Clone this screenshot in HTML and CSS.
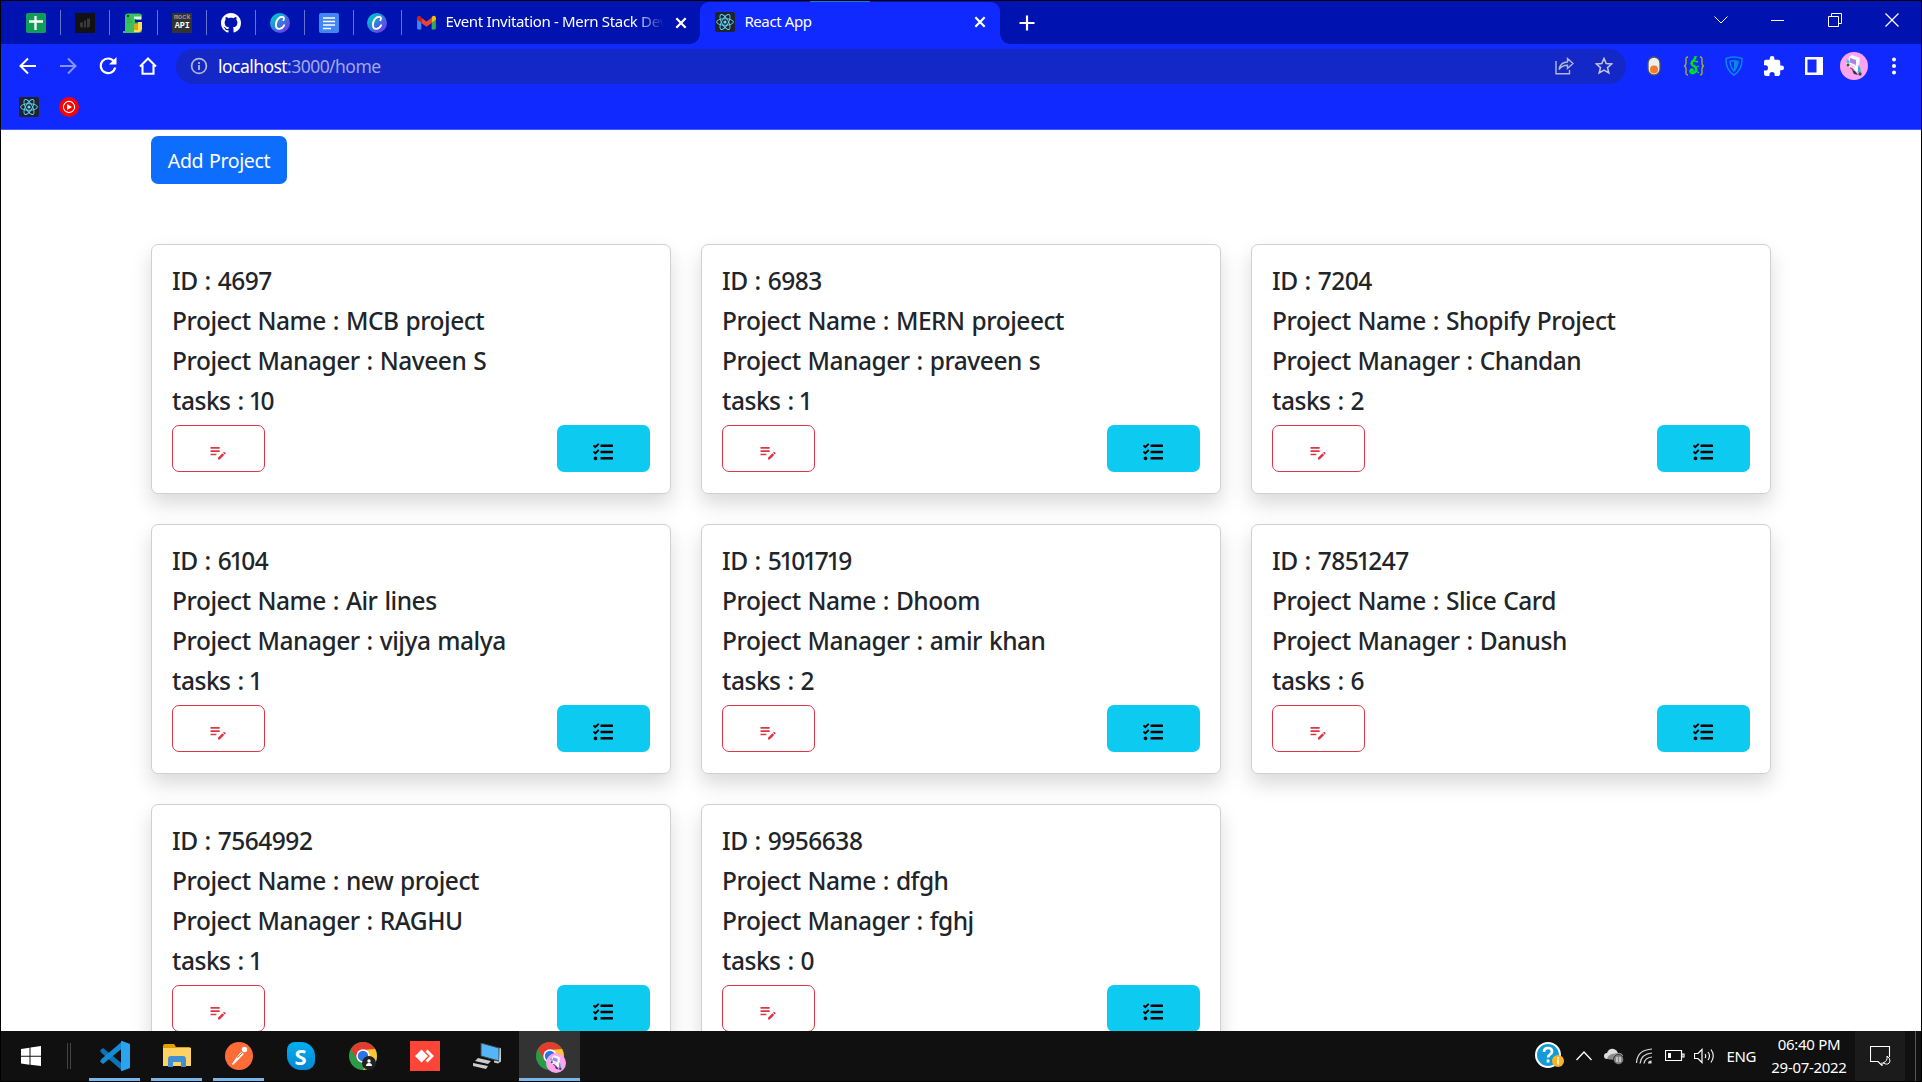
FILE: index.html
```html
<!DOCTYPE html>
<html lang="en">
<head>
<meta charset="utf-8">
<title>React App</title>
<link rel="stylesheet" href="styles.css">
</head>
<body>
<svg class="defs" width="0" height="0">
  <defs>
    <linearGradient id="canva" x1="0" y1="0" x2="1" y2="1"><stop offset=".15" stop-color="#00c4cc"/><stop offset=".55" stop-color="#3f6fe0"/><stop offset="1" stop-color="#7d2ae8"/></linearGradient>
    <symbol id="react" viewBox="0 0 20 20"><rect width="20" height="20" rx="2" fill="#20232a"/><g fill="none" stroke="#61dafb" stroke-width=".9"><ellipse cx="10" cy="10" rx="8.4" ry="3.3"/><ellipse cx="10" cy="10" rx="8.4" ry="3.3" transform="rotate(60 10 10)"/><ellipse cx="10" cy="10" rx="8.4" ry="3.3" transform="rotate(120 10 10)"/></g><circle cx="10" cy="10" r="1.6" fill="#61dafb"/></symbol>
    <symbol id="x" viewBox="0 0 12 12"><path d="M2 2l8 8M10 2l-8 8" stroke="#fff" stroke-width="1.9"/></symbol>
    <symbol id="canva-icon" viewBox="0 0 20 20"><circle cx="10" cy="10" r="10" fill="url(#canva)"/><path d="M13.400 7.300c1.100-1.700.6-3.600-1.400-3.600-3.400 0-6.100 4.400-6.100 8 0 2.700 1.300 4.200 3.300 4.200 2.200 0 3.900-1.600 4.900-3.600" fill="none" stroke="#fff" stroke-width="1.900" stroke-linecap="round"/></symbol>
    <symbol id="edit" viewBox="0 0 24 24"><path fill="currentColor" d="M3 10h11v2H3v-2zm0-2h11V6H3v2zm0 8h7v-2H3v2zm15.010-3.130.71-.71c.39-.39 1.020-.39 1.410 0l.71.71c.39.39.39 1.020 0 1.410l-.71.71-2.120-2.120zm-.71.71-5.300 5.300V21h2.120l5.300-5.300-2.120-2.120z"/></symbol>
    <symbol id="tasks" viewBox="0 0 512 512"><path d="M139.610 35.500a12 12 0 0 0-17 0L58.930 98.810l-22.700-22.120a12 12 0 0 0-17 0L3.530 92.410a12 12 0 0 0 0 17l47.590 47.400a12.780 12.780 0 0 0 17.610 0l15.590-15.620L156.520 69a12.090 12.090 0 0 0 .09-17zm0 159.190a12 12 0 0 0-17 0l-63.680 63.720-22.700-22.100a12 12 0 0 0-17 0L3.530 252a12 12 0 0 0 0 17L51 316.500a12.770 12.770 0 0 0 17.600 0l15.700-15.690 72.200-72.220a12 12 0 0 0 .09-16.900zM64 368c-26.490 0-48.590 21.500-48.590 48S37.530 464 64 464a48 48 0 0 0 0-96zm432 16H208a16 16 0 0 0-16 16v32a16 16 0 0 0 16 16h288a16 16 0 0 0 16-16v-32a16 16 0 0 0-16-16zm0-320H208a16 16 0 0 0-16 16v32a16 16 0 0 0 16 16h288a16 16 0 0 0 16-16V80a16 16 0 0 0-16-16zm0 160H208a16 16 0 0 0-16 16v32a16 16 0 0 0 16 16h288a16 16 0 0 0 16-16v-32a16 16 0 0 0-16-16z"/></symbol>
    <symbol id="scooter" viewBox="0 0 28 28"><circle cx="14" cy="14" r="14" fill="#ffa3ee"/><path d="M9 5l3-2 8 3-1 7-4 2-7-4z" fill="#f4f8ff"/><path d="M10 6l6 2v5l-6-2.500z" fill="#a984d8"/><path d="M6 11l5 2 2 3-2 .5-5-3z" fill="#eef"/><path d="M6.500 7.500l3 1v3l-3-1z" fill="#4fbde8"/><path d="M12 15l6-1 2 4-4 2z" fill="#fff"/><path d="M18 14l2 1 1 6-3-1z" fill="#37b5cf"/><path d="M12 18l3 1 3 4-4-1z" fill="#23364a"/><circle cx="20" cy="22" r="1.700" fill="#31524a"/><circle cx="8" cy="13" r="1.500" fill="#4b4a36"/><path d="M10 15.500l4 3" stroke="#c33d68" stroke-width="1.500"/></symbol>
    <symbol id="chrome" viewBox="0 0 28 28"><circle cx="14" cy="14" r="14" fill="#2c9b47"/><path d="M26.100 7A14 14 0 0 1 14 28l6-10.500L14 7z" fill="#fdc82f"/><path d="M1.900 7A14 14 0 0 1 26.100 7L14 8 8 17.500z" fill="#e33b2e"/><circle cx="14" cy="14" r="6.700" fill="#fff"/><circle cx="14" cy="14" r="5.200" fill="#2c73e8"/></symbol>
  </defs>
</svg>
<div class="screen">
  <header class="browser">
    <div class="tabs">
      <div class="pinned">
        <span class="pin"><svg width="20" height="20"><rect width="20" height="20" rx="2" fill="#0f9d58"/><path d="M9.500 3v14M3 8.500h14" stroke="#fff" stroke-width="2.300"/></svg></span>
        <span class="pin"><svg width="20" height="20"><rect width="20" height="20" fill="#121212"/><path d="M5 9.500h3v5q-3 0-3-2zM9 7.500h2v7H9zM12 5.500h3v7q0 2-3 2z" fill="#3a3a3a"/></svg></span>
        <span class="pin"><svg width="20" height="20"><path d="M2 3q0-2.500 3-2.500h11q3 0 3 3v3h-7v3h7v7.500q0 3-4 3H0v-2h2z" fill="#3bc15c"/><path d="M11 3.500h7v3h-4l-3-1z" fill="#dff5dd"/><path d="M15 9h4v7l-2 3h-6v-4l4-1z" fill="#ffe14a"/><path d="M11 11h4v6h-4z" fill="#d8a52c"/><path d="M4 6h4M4 9h5" stroke="#2da84d"/><circle cx="5" cy="3" r="1.200" fill="#174c25"/></svg></span>
        <span class="pin"><span class="mock"><span>mock</span><b>API</b></span></span>
        <span class="pin"><svg width="20" height="20" viewBox="0 0 16 16"><path fill="#fff" d="M8 0C3.580 0 0 3.580 0 8c0 3.540 2.290 6.530 5.470 7.590.4.070.55-.17.55-.38 0-.19-.01-.82-.01-1.490-2.010.37-2.530-.49-2.690-.94-.09-.23-.48-.94-.82-1.130-.28-.15-.68-.52-.01-.53.63-.01 1.080.58 1.230.82.72 1.210 1.870.87 2.330.66.070-.52.28-.87.51-1.070-1.780-.2-3.640-.89-3.640-3.950 0-.87.31-1.590.82-2.150-.08-.2-.36-1.020.08-2.120 0 0 .67-.21 2.200.82.64-.18 1.320-.27 2-.27s1.360.09 2 .27c1.530-1.040 2.200-.82 2.200-.82.44 1.100.16 1.920.08 2.120.51.56.82 1.270.82 2.150 0 3.070-1.870 3.750-3.650 3.950.29.25.54.73.54 1.480 0 1.070-.01 1.930-.01 2.200 0 .21.15.46.55.38A8.010 8.010 0 0 0 16 8c0-4.420-3.580-8-8-8z"/></svg></span>
        <span class="pin"><svg width="20" height="20"><use href="#canva-icon"/></svg></span>
        <span class="pin"><svg width="20" height="20"><rect width="20" height="20" rx="2" fill="#4285f4"/><path d="M4 5h12M4 8.500h12M4 12h12M4 15.500h8" stroke="#fff" stroke-width="1.700"/></svg></span>
        <span class="pin"><svg width="20" height="20"><use href="#canva-icon"/></svg></span>
      </div>
      <div class="tab mail">
        <svg width="19" height="15" viewBox="0 0 20 16"><path d="M0 2v12q0 1.500 1.500 1.500H4.500V6z" fill="#4285f4"/><path d="M20 2v12q0 1.500-1.500 1.500H15.500V6z" fill="#34a853"/><path d="M4.500 3l5.500 4 5.500-4v5.500L10 12.500 4.500 8.500z" fill="#ea4335"/><path d="M0 2.500Q1-.5 4.500 2v6L0 5z" fill="#c5221f"/><path d="M20 2.500Q19-.5 15.500 2v6L20 5z" fill="#fbbc04"/></svg>
        <span class="tab-title fade">Event Invitation - Mern Stack Dev</span>
        <svg class="close" width="14" height="14"><use href="#x"/></svg>
      </div>
      <div class="tab active">
        <svg width="20" height="20"><use href="#react"/></svg>
        <span class="tab-title">React App</span>
        <svg class="close" width="14" height="14"><use href="#x"/></svg>
      </div>
      <svg class="plus" width="16" height="16"><path d="M8 .5v15M.5 8h15" stroke="#fff" stroke-width="2.200"/></svg>
      <div class="window-buttons">
        <svg width="14" height="14"><path d="M.5 3.500l6.500 6.500 6.500-6.500" fill="none" stroke="#fff"/></svg>
        <svg width="14" height="14"><path d="M0 7.500h13" stroke="#fff"/></svg>
        <svg width="14" height="14"><path d="M.5 3.500h10v10H.5zM3.500 3V.5h10v10H11" fill="none" stroke="#fff"/></svg>
        <svg width="14" height="14"><path d="M.5.5l13 13M13.500.5l-13 13" stroke="#fff" stroke-width="1.200"/></svg>
      </div>
    </div>
    <div class="toolbar">
      <div class="nav">
        <svg width="18" height="18"><path d="M17 9H2M9 1.500L1.500 9 9 16.500" fill="none" stroke="#fff" stroke-width="2"/></svg>
        <svg width="18" height="18"><path d="M1 9h15M9 1.500L16.500 9 9 16.500" fill="none" stroke="#8793ff" stroke-width="2"/></svg>
        <svg width="18" height="18"><path d="M15 4.500A7.300 7.300 0 1 0 16.200 10.500" fill="none" stroke="#fff" stroke-width="2.200"/><path d="M17.500 0v7.500H10z" fill="#fff"/></svg>
        <svg width="18" height="18"><path d="M1 9.500L9 1.500l8 8M3.500 8v8.800h11V8" fill="none" stroke="#fff" stroke-width="2.100"/></svg>
      </div>
      <div class="address">
        <svg width="18" height="18"><circle cx="9" cy="9" r="7.400" fill="none" stroke="#b4b9cf" stroke-width="1.700"/><path d="M9 8v5M9 5v1.900" stroke="#b4b9cf" stroke-width="1.800"/></svg>
        <span class="url">localhost<i>:3000/home</i></span>
        <svg class="share" width="19" height="18"><path d="M1 4v12.700h13.500V13M4 12.500C5 7.500 8 5 12.500 5V1.500L18 6.500l-5.500 5V8.200C8.500 8.200 6 9.500 4 12.500z" fill="none" stroke="#b4b9cf" stroke-width="1.400"/></svg>
        <svg width="18" height="18"><path d="M9 1.500l2.200 5 5.400.5-4.100 3.600 1.300 5.300L9 13.100l-4.800 2.800 1.300-5.300L1.400 7l5.400-.5z" fill="none" stroke="#c1c5d8" stroke-width="1.600"/></svg>
      </div>
      <div class="extensions">
        <svg width="20" height="20"><rect x="4" y="1" width="12" height="18" rx="6" fill="#eee" stroke="#555" stroke-width="1.300"/><circle cx="10" cy="13.500" r="4" fill="#f47b2c"/></svg>
        <svg width="20" height="20"><path d="M4 1Q1.500 1 2 5 2.500 9 .5 10q2 1 1.500 5Q1.500 19 4 19M16 1q2.500 0 2 4-.5 4 1.500 5-2 1-1.500 5 .5 4-2 4" fill="none" stroke="#a7b22d" stroke-width="1.400"/><path d="M12 0L10 4q-4 3-1 5.500 4 2 3 5-2 4-5 2-1.500-2 .5-3 2 0 1 2" fill="none" stroke="#00e019" stroke-width="2.400"/><path d="M6 8l3-1M10 5l4 1M12 11l3-1M12 15l3 2" stroke="#00e019" stroke-width="1.300"/></svg>
        <svg width="20" height="20"><path d="M2 2.500Q10-.5 18 2.500q.5 11-8 16.500Q1.500 13.500 2 2.500z" fill="none" stroke="#078adf" stroke-width="1.500"/><path d="M6 5.500q4-1.500 8 0-.5 6-4 9.500-3.500-3.500-4-9.500z" fill="none" stroke="#078adf" stroke-width="1.600"/><path d="M10 5q2.500 0 4 .5-.5 6-4 9.500z" fill="#078adf"/></svg>
        <svg width="20" height="20" viewBox="2 1 21 21"><path d="M20.500 11H19V7c0-1.100-.9-2-2-2h-4V3.500a2.500 2.500 0 0 0-5 0V5H4c-1.100 0-2 .9-2 2v3.800h1.500a2.700 2.700 0 0 1 0 5.400H2V20c0 1.100.9 2 2 2h3.800v-1.500a2.700 2.700 0 0 1 5.400 0V22H17c1.100 0 2-.9 2-2v-4h1.500a2.500 2.500 0 0 0 0-5z" fill="#fff"/></svg>
        <svg width="20" height="20"><path d="M1 1h18v18H1zM3.500 3.500v13h9v-13z" fill="#fff" fill-rule="evenodd"/></svg>
        <svg width="28" height="28"><use href="#scooter"/></svg>
        <svg width="20" height="20"><circle cx="10" cy="3.500" r="2" fill="#fff"/><circle cx="10" cy="10" r="2" fill="#fff"/><circle cx="10" cy="16.500" r="2" fill="#fff"/></svg>
      </div>
    </div>
    <div class="bookmarks">
      <svg width="20" height="20"><use href="#react"/></svg>
      <svg width="20" height="20"><circle cx="10" cy="10" r="10" fill="#f00"/><circle cx="10" cy="10" r="5.600" fill="none" stroke="#fff" stroke-width="1.100"/><path d="M8 7l5 3-5 3z" fill="#fff"/></svg>
    </div>
  </header>
  <main class="page">
    <button class="add">Add Project</button>
    <div class="cards" id="cards"></div>
  </main>
  <footer class="taskbar">
    <div class="apps">
      <div class="start"><svg width="20" height="20"><path d="M0 3l8.500-1.300v8H0zM9.500 1.500L20 0v9.700H9.500zM0 10.700h8.500v8L0 17.500zM9.500 10.700H20V20L9.500 18.700z" fill="#fff"/></svg></div>
      <span class="grip"></span>
      <div class="app open"><svg width="30" height="30"><path d="M0 9.500l3-2.500 19 15.500v7L1.500 12z" fill="#0d73b8"/><path d="M0 20.500L3 23 22 7.500v-7L1.500 18z" fill="#168ad2"/><path d="M21 0h1l8 3v24l-8 3h-1z" fill="#2aa4f0"/></svg></div>
      <div class="app open"><svg width="28" height="24"><path d="M0 2q0-2 2-2h9l2 3h13q2 0 2 2v5H0z" fill="#dfa000"/><path d="M0 4h28v18H0z" fill="#ffd264"/><path d="M5 23v-8q0-3 3-3h12q3 0 3 3v8h-5v-5h-8v5z" fill="#3f8fd2"/></svg></div>
      <div class="app open"><svg width="28" height="28"><circle cx="14" cy="14" r="14" fill="#ff6c37"/><path d="M7 22l4-6 5-6 3 2-5 5-6 6z" fill="#fff"/><circle cx="19.500" cy="7.500" r="2.700" fill="#fff"/><path d="M12 16l5-5" stroke="#ff6c37"/></svg></div>
      <div class="app"><span class="skype">S</span></div>
      <div class="app"><svg width="28" height="28"><use href="#chrome"/></svg><svg class="profile" width="14" height="14"><circle cx="7" cy="7" r="7" fill="#202124"/><circle cx="7" cy="5" r="1.700" fill="#fff"/><path d="M4 10q0-3 3-3t3 3z" fill="#fff"/></svg></div>
      <div class="app"><svg width="30" height="30"><path d="M0 0h30v30H0z" fill="#ff4438"/><path d="M11.500 8.500L18 15l-6.500 6.500L5 15zM15.500 10.500l2-2L24 15l-6.500 6.500-2-2L20 15z" fill="#fff"/></svg></div>
      <div class="app"><svg width="28" height="26"><path d="M8 0l18 5v13L8 13z" fill="#54b6f5" stroke="#3b4650"/><path d="M26.500 4.500l1.500 1v13l-3 2-4-1v-2l5 1z" fill="#c5c8ca"/><path d="M5 15l13 3-3 3-13-3zM0 20l15 3-2 3-13-3z" fill="#cacccd"/></svg></div>
      <div class="app current"><svg width="28" height="28"><use href="#chrome"/></svg><svg class="profile large" width="20" height="20"><use href="#scooter"/></svg></div>
    </div>
    <div class="tray">
      <svg width="29" height="28"><circle cx="13" cy="13" r="12" fill="#149bd7" stroke="#fff" stroke-width="2"/><path d="M9 10q0-4 4-4t4 3.500c0 3-4 3-4 6M13 17.500v3" fill="none" stroke="#fff" stroke-width="2.700"/><circle cx="23" cy="19" r="6" fill="#fbb321"/><path d="M23 17.500v5M23 15v1.700" stroke="#fff" stroke-width="1.600"/></svg>
      <svg width="16" height="10"><path d="M.5 9L8 1l7.500 8" fill="none" stroke="#fff" stroke-width="1.300"/></svg>
      <svg width="20" height="17"><path d="M3 11a3 3 0 0 1 0-6q2-5 7-4 3 1 4 4 5 0 5 4v3z" fill="#ddd"/><path d="M3 11q1-4 5-5l6-1q5 0 5 4v3z" fill="#8d8d8d"/><circle cx="14.500" cy="11.500" r="5" fill="#868686" stroke="#111" stroke-width=".7"/><path d="M13 9v5M16 9v5" stroke="#fff"/></svg>
      <svg width="17" height="16"><path d="M.5 15Q1 2 16 1M4 15.500Q5 6 16 5M8 15.500Q9 9.500 16 9" fill="none" stroke="#ddd" stroke-width="1.200"/><path d="M12 15.500q0-3 3.500-3v3z" fill="#ddd"/></svg>
      <svg width="20" height="12"><path d="M.5.5h16v10H.5zM17 4h2v3h-2z" fill="none" stroke="#fff" stroke-width="1.200"/><path d="M3 3h3v5H3z" fill="#fff"/></svg>
      <svg class="volume" width="21" height="16"><path d="M.5 5.500H4l4-4v13l-4-4H.5z" fill="none" stroke="#fff" stroke-width="1.200"/><path d="M11 6q1.500 2 0 4M14 4q3 4 0 8M17 1.500q4.500 6.500 0 13" fill="none" stroke="#fff" stroke-width="1.100"/></svg>
      <span class="lang">ENG</span>
      <div class="clock"><span>06:40 PM</span><span>29-07-2022</span></div>
      <div class="notice"><svg width="21" height="20"><path d="M19.500 11V.5H.5v15H8l4 4v-3" fill="none" stroke="#fff" stroke-width="1.100"/><path d="M17 10q1 5-4 7 6 3 7-2 0-3-3-5z" fill="none" stroke="#fff"/></svg></div>
      <span class="peek"></span>
    </div>
  </footer>
</div>
<script src="app.js"></script>
</body>
</html>
```
FILE: styles.css
```css
* { box-sizing: border-box; }
body { margin: 0; background: #000; overflow: hidden; font-family: "Noto Sans", "Open Sans", sans-serif; }
svg { display: block; flex: none; }
.defs { position: absolute; }
.screen { width: 1922px; height: 1082px; border: 1px solid #000; display: flex; flex-direction: column; background: #fff; overflow: hidden; }
.browser { flex: none; height: 129px; background: #0f29ff; border-bottom: 1px solid #4659ff; color: #fff; }
.tabs { height: 43px; background: linear-gradient(90deg, transparent 809px, #0c7de0 809px, #0c7de0 869px, transparent 869px) 0 0 / 100% 1px no-repeat #0013b0; display: flex; align-items: center; }
.pinned { display: flex; padding-left: 11px; }
.pin { width: 48.8px; height: 25px; display: flex; align-items: center; justify-content: center; border-right: 1px solid #6671d0; }
.mock { width: 20px; height: 20px; background: #333; display: flex; flex-direction: column; align-items: center; font: 7px/9px "Liberation Mono", monospace; color: #bbb; }
.mock b { font-size: 8.500px; color: #fff; }
.tab { height: 42px; display: flex; align-items: center; font-size: 15px; letter-spacing: -.4px; }
.mail { width: 298px; padding-left: 15px; }
.tab-title { margin-left: 9px; padding-bottom: 3px; white-space: nowrap; }
.fade { width: 219px; overflow: hidden; letter-spacing: -.33px; mask-image: linear-gradient(90deg, #000 86%, transparent); }
.mail .close { margin-left: 10px; }
.active { position: relative; width: 300px; align-self: flex-end; padding: 0 13px 2px 15px; background: #0f29ff; border-radius: 9px 9px 0 0; }
.active::before, .active::after { content: ""; position: absolute; bottom: 0; width: 10px; height: 10px; }
.active::before { left: -10px; background: radial-gradient(circle at 0 0, transparent 9.500px, #0f29ff 10px); }
.active::after { right: -10px; background: radial-gradient(circle at 100% 0, transparent 9.500px, #0f29ff 10px); }
.active .close { margin-left: auto; }
.plus { margin-left: 19px; }
.window-buttons { display: flex; gap: 43px; margin: 0 22px 5px auto; }
.toolbar { display: flex; height: 43px; align-items: center; padding-top: 1px; }
.nav { display: flex; gap: 22px; width: 175px; padding-left: 18px; }
.address { width: 1450px; height: 35px; border-radius: 18px; background: #1428c8; display: flex; align-items: center; padding: 0 13px 0 14px; }
.url { margin-left: 10px; padding-bottom: 1px; font-size: 17.500px; letter-spacing: -.54px; }
.url i { color: #a2a9e7; font-style: normal; }
.share { margin-left: auto; margin-right: 21px; }
.extensions { display: flex; align-items: center; gap: 20px; margin-left: 18px; }
.extensions svg:nth-child(6) { margin: 0 -4px; }
.bookmarks { display: flex; gap: 20px; padding: 10px 18px; }
.page { flex: 1; min-height: 0; overflow: hidden; padding: 6px 150px 0; background: #fff; }
.add { display: block; width: 136px; height: 48px; padding: 0; border: 0; border-radius: 7px; background: #0d6efd; color: #fff; font: 19.500px "Noto Sans", "Open Sans", sans-serif; letter-spacing: -.35px; word-spacing: 1px; }
.cards { margin-top: 60px; display: grid; grid-template-columns: repeat(3, 520px); grid-auto-rows: 250px; gap: 30px; }
.card { border: 1px solid #d0d0d0; border-radius: 7px; background: #fff; padding: 21px 20px 20px; box-shadow: 0 10px 20px rgba(0,0,0,.15); color: #212529; }
.card h5 { margin: 0 0 10px; font-size: 24.500px; line-height: 30px; font-weight: 500; letter-spacing: -.47px; word-spacing: 1px; white-space: nowrap; }
.one { margin: 0 -1.800px; }
.actions { display: flex; justify-content: space-between; margin-top: -1px; }
.card button { width: 93px; height: 47px; border-radius: 7px; padding: 7px 1px 0 0; display: flex; align-items: center; justify-content: center; }
.card .edit { color: #dc3545; border: 1px solid #dc3545; background: #fff; }
.card .tasks { border: 0; background: #0dcaf0; }
.taskbar { flex: none; height: 50px; display: flex; justify-content: space-between; background: #101010; color: #fff; }
.apps { display: flex; }
.start { width: 60px; display: flex; align-items: center; justify-content: center; }
.grip { width: 4px; height: 26px; margin: 12px 18px 0 6px; border: solid #444; border-width: 0 1px; }
.app { position: relative; width: 51px; margin-right: 11px; display: flex; align-items: center; justify-content: center; }
.open { border-bottom: 3px solid #76b9ed; padding-top: 3px; }
.current { width: 61px; background: #333; border-bottom: 3px solid #76b9ed; padding-top: 3px; margin-left: -4px; }
.profile { position: absolute; left: 25px; top: 25px; }
.large { left: 27px; top: 22px; }
.skype { width: 28px; height: 28px; border-radius: 8px 14px 9px 14px; background: linear-gradient(#00b0f0, #0487d5); font: bold 22px/28px "Open Sans", sans-serif; text-align: center; }
.tray { display: flex; align-items: center; }
.tray > svg { margin-right: 12px; }
.tray > .volume { margin: 0 12px 0 -3px; }
.lang { font-size: 15px; letter-spacing: -.4px; margin: 0 7px 0 0; }
.clock { width: 92px; text-align: center; display: flex; flex-direction: column; font-size: 15px; line-height: 23px; letter-spacing: -.3px; }
.notice { width: 50px; height: 50px; background: #1b1b1b; display: flex; align-items: center; justify-content: center; }
.peek { height: 50px; width: 6px; margin-left: 10px; border-left: 1px solid #555; }
```
FILE: app.js
```js
const projects = [
  [4697, "MCB project", "Naveen S", 10],
  [6983, "MERN projeect", "praveen s", 1],
  [7204, "Shopify Project", "Chandan", 2],
  [6104, "Air lines", "vijya malya", 1],
  [5101719, "Dhoom", "amir khan", 2],
  [7851247, "Slice Card", "Danush", 6],
  [7564992, "new project", "RAGHU", 1],
  [9956638, "dfgh", "fghj", 0],
];

// The digit one is set narrower than the other figures.
const figures = (n) => String(n).replace(/1/g, '<span class="one">1</span>');

document.getElementById("cards").innerHTML = projects.map(([id, name, manager, tasks]) => `
  <article class="card">
    <h5>ID : ${figures(id)}</h5>
    <h5>Project Name : ${name}</h5>
    <h5>Project Manager : ${manager}</h5>
    <h5>tasks : ${figures(tasks)}</h5>
    <div class="actions">
      <button class="edit" aria-label="Edit"><svg width="20" height="20"><use href="#edit"/></svg></button>
      <button class="tasks" aria-label="Tasks"><svg width="20" height="20"><use href="#tasks"/></svg></button>
    </div>
  </article>`).join("");
```
